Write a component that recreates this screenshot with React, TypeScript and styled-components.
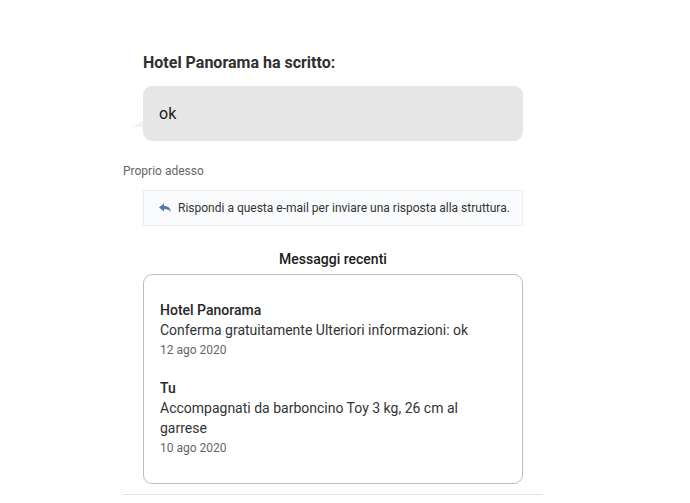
import React from 'react'
import styled, { createGlobalStyle } from 'styled-components'

const GlobalStyle = createGlobalStyle`
  html, body {
    margin: 0;
    padding: 0;
    background: #ffffff;
  }
  body {
    font-family: Roboto, 'Liberation Sans', Arial, sans-serif;
    color: #222;
  }
`

const Page = styled.div`
  width: 420px;
  margin-left: 123px;
  padding-top: 52px;
`

const Section = styled.div`
  padding: 0 20px;
`

const Heading = styled.h2`
  margin: 0 0 12px;
  font-size: 16px;
  line-height: 22px;
  font-weight: 700;
  color: #2f2f2f;
`

const Bubble = styled.div`
  position: relative;
  height: 55px;
  box-sizing: border-box;
  display: flex;
  align-items: center;
  padding: 0 16px;
  background: #e6e6e6;
  border-radius: 9px;
  font-size: 16px;
  color: #1c1c1c;

  &::before {
    content: '';
    position: absolute;
    left: -10px;
    bottom: 14px;
    width: 0;
    height: 0;
    border-right: 10px solid #f1f1f1;
    border-top: 6px solid transparent;
  }
`

const Timestamp = styled.div`
  margin-top: 22px;
  font-size: 12px;
  line-height: 16px;
  color: #666;
`

const ReplyHint = styled.div`
  margin: 11px 20px 0;
  height: 36px;
  box-sizing: border-box;
  display: flex;
  align-items: center;
  gap: 7px;
  padding-left: 15px;
  background: #f9fbfd;
  border: 1px solid #e6edf5;
  font-size: 12px;
  color: #333;
`

const ReplyIcon = styled.svg`
  width: 12px;
  height: 10px;
  flex: none;
  fill: #4f7aa6;
`

const RecentTitle = styled.div`
  margin-top: 24px;
  text-align: center;
  font-size: 14px;
  line-height: 18px;
  font-weight: 500;
  color: #1c1c1c;
`

const Card = styled.div`
  margin: 6px 20px 0;
  padding: 25px 16px 25px;
  border: 1px solid #bdbdbd;
  border-radius: 9px;
  display: flex;
  flex-direction: column;
  gap: 18px;
`

const Message = styled.div`
  display: flex;
  flex-direction: column;
`

const Sender = styled.div`
  font-size: 14px;
  line-height: 20px;
  font-weight: 500;
  color: #262626;
`

const Body = styled.div`
  font-size: 14px;
  line-height: 20px;
  color: #333;
  max-width: 320px;
`

const DateText = styled.div`
  font-size: 12px;
  line-height: 20px;
  color: #666;
`

const Divider = styled.hr`
  margin: 10px 0 0;
  border: 0;
  border-top: 1px solid #e4e4e4;
`

const messages = [
  {
    sender: 'Hotel Panorama',
    body: 'Conferma gratuitamente Ulteriori informazioni: ok',
    date: '12 ago 2020',
  },
  {
    sender: 'Tu',
    body: 'Accompagnati da barboncino Toy 3 kg, 26 cm al garrese',
    date: '10 ago 2020',
  },
]

export default function App() {
  return (
    <>
      <GlobalStyle />
      <Page>
        <Section>
          <Heading>Hotel Panorama ha scritto:</Heading>
          <Bubble>ok</Bubble>
        </Section>
        <Timestamp>Proprio adesso</Timestamp>
        <ReplyHint>
          <ReplyIcon viewBox="0 0 12 10">
            <path d="M0 4.5 L5 0.5 L5 3 C9 3 11.5 5 12 9 C10.5 6.8 8.5 6 5 6 L5 8.5 Z" />
          </ReplyIcon>
          Rispondi a questa e-mail per inviare una risposta alla struttura.
        </ReplyHint>
        <RecentTitle>Messaggi recenti</RecentTitle>
        <Card>
          {messages.map((m) => (
            <Message key={m.date}>
              <Sender>{m.sender}</Sender>
              <Body>{m.body}</Body>
              <DateText>{m.date}</DateText>
            </Message>
          ))}
        </Card>
        <Divider />
      </Page>
    </>
  )
}
